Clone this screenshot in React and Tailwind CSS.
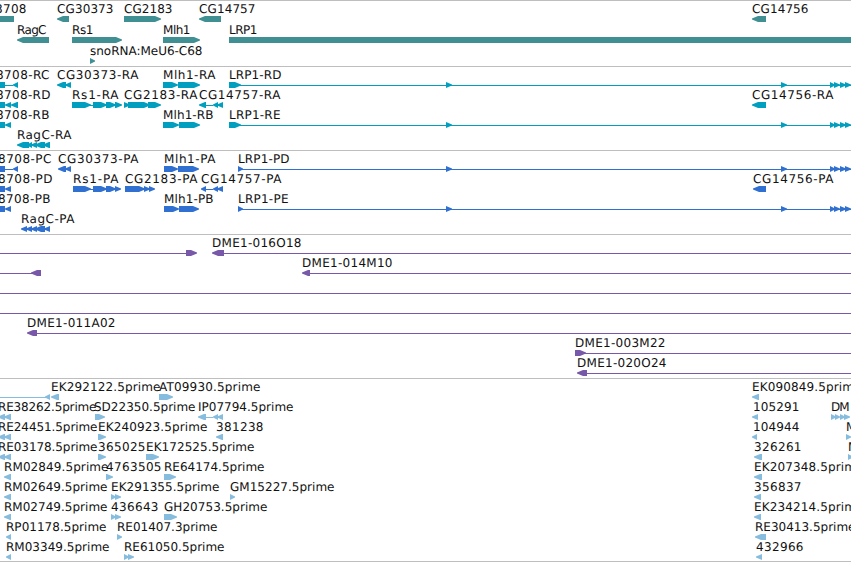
// Each label is [text, left ink edge, right ink edge, baseline].
// Each feature is [kind, start, end, centre line]:
// L and R are exons pointing left or right, B is a plain block, I is an intron line.
const lrpIntrons = (start, y) => [
  ['I', start, 851, y],
  ['R', 446, 452, y],
  ['R', 781, 787, y],
  ['R', 830, 835, y],
  ['R', 834, 840, y],
  ['R', 840, 846, y],
  ['R', 845, 851, y],
];

const tracks = [
  {
    name: 'genes', top: 0, bottom: 66, color: '#3f8f93',
    labels: [
      ['8708', -4, 26, 13], ['CG30373', 58, 113, 13], ['CG2183', 125, 172, 13],
      ['CG14757', 200, 255, 13], ['CG14756', 753, 808, 13],
      ['RagC', 18, 46, 34], ['Rs1', 73, 93, 34], ['Mlh1', 164, 190, 34], ['LRP1', 230, 257, 34],
      ['snoRNA:MeU6-C68', 91, 202, 55],
    ],
    features: [
      ['B', 0, 14, 19], ['L', 57, 69, 19], ['R', 124, 161, 19], ['L', 199, 221, 19], ['L', 752, 766, 19],
      ['L', 17, 49, 40], ['R', 72, 122, 40], ['R', 163, 200, 40], ['B', 229, 851, 40],
      ['R', 90, 95, 61],
    ],
  },
  {
    name: 'transcripts', top: 66, bottom: 150, color: '#009fc0',
    labels: [
      ['8708-RC', -3, 49, 79], ['CG30373-RA', 58, 138, 79], ['Mlh1-RA', 164, 215, 79], ['LRP1-RD', 230, 281, 79],
      ['8708-RD', -3, 50, 99], ['Rs1-RA', 73, 118, 99], ['CG2183-RA', 125, 197, 99],
      ['CG14757-RA', 200, 280, 99], ['CG14756-RA', 753, 833, 99],
      ['8708-RB', -3, 49, 119], ['Mlh1-RB', 164, 213, 119], ['LRP1-RE', 230, 280, 119],
      ['RagC-RA', 18, 71, 139],
    ],
    features: [
      ['B', 0, 5, 85], ['I', 5, 13, 85], ['L', 13, 18, 85], ['L', 57, 66, 85], ['L', 65, 71, 85],
      ['R', 163, 178, 85], ['R', 178, 200, 85], ['R', 229, 241, 85], ...lrpIntrons(240, 85),
      ['B', 0, 5, 105], ['L', 5, 11, 105], ['L', 11, 18, 105],
      ['R', 72, 91, 105], ['I', 90, 94, 105], ['R', 93, 107, 105], ['R', 106, 116, 105], ['R', 115, 122, 105],
      ['R', 124, 130, 105], ['R', 128, 150, 105], ['R', 148, 161, 105],
      ['L', 199, 206, 105], ['I', 206, 213, 105], ['L', 213, 218, 105], ['L', 217, 223, 105], ['L', 752, 766, 105],
      ['B', 0, 5, 125], ['L', 5, 11, 125], ['R', 163, 179, 125], ['R', 179, 200, 125],
      ['R', 229, 241, 125], ...lrpIntrons(240, 125),
      ['L', 17, 29, 145], ['L', 27, 32, 145], ['L', 31, 37, 145], ['L', 35, 45, 145], ['L', 43, 50, 145],
    ],
  },
  {
    name: 'proteins', top: 150, bottom: 234, color: '#3070d0',
    labels: [
      ['8708-PC', -1, 51, 163], ['CG30373-PA', 59, 138, 163], ['Mlh1-PA', 165, 215, 163], ['LRP1-PD', 239, 289, 163],
      ['8708-PD', -1, 52, 183], ['Rs1-PA', 74, 118, 183], ['CG2183-PA', 126, 197, 183],
      ['CG14757-PA', 202, 281, 183], ['CG14756-PA', 754, 833, 183],
      ['8708-PB', -1, 50, 203], ['Mlh1-PB', 165, 213, 203], ['LRP1-PE', 239, 288, 203],
      ['RagC-PA', 22, 74, 223],
    ],
    features: [
      ['B', 0, 5, 169], ['I', 5, 13, 169], ['L', 13, 18, 169], ['L', 58, 66, 169], ['L', 65, 71, 169],
      ['R', 164, 178, 169], ['R', 178, 199, 169], ['R', 238, 243, 169], ...lrpIntrons(240, 169),
      ['B', 0, 5, 189], ['L', 5, 11, 189],
      ['R', 73, 91, 189], ['I', 90, 94, 189], ['R', 93, 107, 189], ['R', 106, 116, 189], ['R', 115, 121, 189],
      ['R', 125, 145, 189], ['R', 144, 150, 189], ['R', 149, 155, 189],
      ['L', 201, 206, 189], ['I', 206, 213, 189], ['L', 213, 218, 189], ['L', 217, 223, 189], ['L', 753, 766, 189],
      ['B', 0, 5, 209], ['L', 5, 11, 209], ['R', 164, 179, 209], ['R', 179, 199, 209],
      ['R', 238, 243, 209], ...lrpIntrons(240, 209),
      ['L', 21, 27, 229], ['L', 26, 32, 229], ['L', 31, 37, 229], ['L', 35, 45, 229], ['L', 44, 50, 229],
    ],
  },
  {
    name: 'clones', top: 234, bottom: 378, color: '#7858a8',
    labels: [
      ['DME1-016O18', 213, 301, 247], ['DME1-014M10', 303, 392, 267], ['DME1-011A02', 28, 115, 327],
      ['DME1-003M22', 576, 665, 347], ['DME1-020O24', 578, 666, 367],
    ],
    features: [
      ['I', 0, 187, 253], ['R', 186, 197, 253], ['L', 212, 224, 253], ['I', 224, 851, 253],
      ['I', 0, 33, 273], ['L', 31, 41, 273], ['L', 302, 310, 273], ['I', 310, 851, 273],
      ['I', 0, 851, 293], ['I', 0, 851, 313],
      ['L', 27, 37, 333], ['I', 37, 851, 333],
      ['R', 575, 586, 353], ['I', 584, 851, 353],
      ['L', 577, 587, 373], ['I', 587, 851, 373],
    ],
  },
  {
    name: 'ests', top: 378, bottom: 561, color: '#86bcde',
    labels: [
      ['EK292122.5prime', 52, 160, 391], ['AT09930.5prime', 160, 260, 391], ['EK090849.5prime', 753, 861, 391],
      ['RE38262.5prime', -1, 96, 411], ['SD22350.5prime', 95, 195, 411], ['IP07794.5prime', 199, 293, 411],
      ['105291', 754, 799, 411], ['DM', 832, 849, 411],
      ['RE24451.5prime', -1, 97, 431], ['EK240923.5prime', 99, 207, 431], ['381238', 217, 263, 431],
      ['104944', 754, 799, 431], ['M', 847, 856, 431],
      ['RE03178.5prime', -1, 97, 451], ['365025', 99, 145, 451], ['EK172525.5prime', 147, 254, 451],
      ['326261', 755, 801, 451], ['M', 849, 858, 451],
      ['RM02849.5prime', 5, 108, 471], ['4763505', 107, 161, 471], ['RE64174.5prime', 165, 264, 471],
      ['EK207348.5prime', 755, 863, 471],
      ['RM02649.5prime', 5, 107, 491], ['EK291355.5prime', 112, 219, 491], ['GM15227.5prime', 231, 334, 491],
      ['356837', 755, 801, 491],
      ['RM02749.5prime', 5, 107, 511], ['436643', 112, 158, 511], ['GH20753.5prime', 165, 267, 511],
      ['EK234214.5prime', 755, 863, 511],
      ['RP01178.5prime', 7, 106, 531], ['RE01407.3prime', 118, 217, 531], ['RE30413.5prime', 756, 855, 531],
      ['RM03349.5prime', 7, 109, 551], ['RE61050.5prime', 125, 224, 551], ['432966', 757, 803, 551],
    ],
    features: [
      ['I', 0, 46, 397], ['L', 45, 50, 397], ['L', 51, 59, 397], ['R', 159, 173, 397], ['L', 752, 759, 397],
      ['L', -2, 5, 417], ['L', 4, 11, 417], ['R', 95, 105, 417],
      ['L', 198, 206, 417], ['I', 206, 213, 417], ['L', 213, 218, 417], ['L', 217, 223, 417], ['L', 752, 758, 417],
      ['R', 831, 836, 417], ['R', 835, 840, 417], ['R', 840, 845, 417], ['R', 844, 850, 417],
      ['L', -2, 5, 437], ['L', 4, 11, 437], ['R', 98, 106, 437], ['L', 216, 223, 437], ['L', 752, 757, 437], ['R', 846, 851, 437],
      ['L', -2, 5, 457], ['L', 4, 11, 457], ['R', 98, 106, 457], ['R', 146, 159, 457], ['L', 754, 762, 457], ['R', 848, 853, 457],
      ['L', 4, 11, 477], ['R', 106, 113, 477], ['R', 164, 176, 477], ['L', 754, 762, 477],
      ['L', 4, 11, 497], ['R', 111, 116, 497], ['R', 115, 121, 497], ['R', 230, 235, 497], ['L', 754, 761, 497],
      ['L', 4, 11, 517], ['R', 111, 116, 517], ['R', 115, 121, 517], ['R', 164, 177, 517], ['L', 754, 761, 517],
      ['L', 6, 11, 537], ['R', 117, 122, 537], ['L', 755, 766, 537],
      ['L', 6, 11, 557], ['R', 124, 129, 557], ['R', 128, 134, 557], ['L', 756, 762, 557],
    ],
  },
];

function Feature({ kind, start, end, y, color }) {
  if (kind === 'I') return <rect x={start} y={y} width={end - start} height="1" fill={color} shapeRendering="crispEdges" />;
  if (kind === 'B') return <rect x={start} y={y - 3} width={end - start} height="6" fill={color} shapeRendering="crispEdges" />;
  const head = Math.min(6, end - start);
  const tip = kind === 'R' ? end : start;
  const neck = kind === 'R' ? end - head : start + head;
  const tail = kind === 'R' ? start : end;
  return (
    <polygon
      points={`${tail},${y - 3} ${neck},${y - 3} ${tip},${y - 0.4} ${tip},${y + 0.4} ${neck},${y + 3} ${tail},${y + 3}`}
      fill={color}
    />
  );
}

function Track({ track }) {
  const height = track.bottom - track.top - 1;
  return (
    <section className="border-t border-[#bebebe]">
      <svg
        className="block w-[851px] overflow-hidden"
        height={height}
        viewBox={`0 ${track.top + 1} 851 ${height}`}
        aria-label={track.name}
      >
        <g>
          {track.features.map(([kind, start, end, y], i) => (
            <Feature key={i} kind={kind} start={start} end={end} y={y} color={track.color} />
          ))}
        </g>
        <g className="fill-[#111111] font-['DejaVu_Sans',sans-serif] text-[12px]" textRendering="geometricPrecision">
          {track.labels.map(([text, left, right, y], i) => (
            <text key={i} x={left - 1} y={y} textLength={right - left + 1.5} lengthAdjust="spacing">
              {text}
            </text>
          ))}
        </g>
      </svg>
    </section>
  );
}

export default function App() {
  return (
    <main className="flex h-[562px] w-[851px] flex-col overflow-hidden border-b border-[#bebebe] bg-white">
      {tracks.map((track) => (
        <Track key={track.name} track={track} />
      ))}
    </main>
  );
}
